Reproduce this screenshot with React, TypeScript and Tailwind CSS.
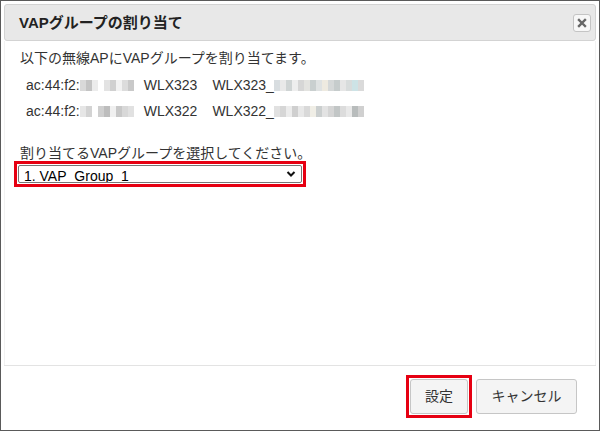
import React from "react";

const FONT = { fontFamily: '"Liberation Sans", "Noto Sans CJK JP", sans-serif' };

function Blur({ cells }: { cells: string[] }) {
  return (
    <span className="inline-flex h-[11px] items-stretch align-middle">
      {cells.map((c, i) => (
        <span key={i} className="w-[6px]" style={{ backgroundColor: c }} />
      ))}
    </span>
  );
}

const blurA = ["#d9d9d9", "#c4c4c4", "#ececec", "#ffffff", "#e3e3e3", "#d0d0d0", "#f2f2f2", "#dcdcdc", "#c9c9c9"];
const blurB = ["#e6e6e6", "#d3d3d3", "#ffffff", "#cfcfcf", "#bdbdbd", "#f0f0f0", "#c8c8c8", "#d8d8d8", "#e1e1e1"];
const blurC = ["#d8dde0", "#e9e9e9", "#cfd4d4", "#eeeeee", "#d6d6d6", "#e3e3e0", "#c9cfcf", "#dfe2e2", "#eeeae0", "#d5d8d8", "#c6cccc", "#e6e6e6", "#d8dcdc", "#cde3e6", "#dadada"];
const blurD = ["#e1e1e1", "#d6d6d6", "#ececec", "#cfcfcf", "#e8e8e8", "#d9d9d9", "#f0eee6", "#cbcfcf", "#e3e3e3", "#d5d5d5", "#c2c6c6", "#dcdcdc", "#e9e9e9", "#b8bcbc", "#d0d0d0"];

export default function App() {
  return (
    <div
      className="w-[600px] h-[431px] border border-[#5a5a5a] bg-white p-[3px] flex flex-col text-[14px] text-[#333]"
      style={FONT}
    >
      <div className="h-[37px] shrink-0 rounded-[3px] border border-[#d3d3d3] bg-[#e8e8e8] flex items-center justify-between pl-[14px] pr-[4px]">
        <span className="text-[15px] font-bold text-[#222] mt-[1px]">VAPグループの割り当て</span>
        <span className="w-[18px] h-[18px] rounded-[3px] border border-[#c4c4c4] bg-[#f7f7f7] flex items-center justify-center">
          <svg width="10" height="10" viewBox="0 0 10 10">
            <path d="M2 2 L8 8 M8 2 L2 8" stroke="#666" strokeWidth="2.4" strokeLinecap="square" />
          </svg>
        </span>
      </div>

      <div className="flex-1 flex flex-col px-[15px] pt-[7px] border-x border-[#f2f2f2]">
        <div className="leading-[20px]">以下の無線APにVAPグループを割り当てます。</div>
        <div className="pl-[6px] mt-[7px] flex flex-col gap-[6px]">
          <div className="flex items-center leading-[20px] whitespace-pre">
            <span>ac:44:f2:</span>
            <Blur cells={blurA} />
            <span className="ml-[10px]">WLX323</span>
            <span className="ml-[15px]">WLX323_</span>
            <Blur cells={blurC} />
          </div>
          <div className="flex items-center leading-[20px] whitespace-pre">
            <span>ac:44:f2:</span>
            <Blur cells={blurB} />
            <span className="ml-[10px]">WLX322</span>
            <span className="ml-[15px]">WLX322_</span>
            <Blur cells={blurD} />
          </div>
        </div>
        <div className="mt-[23px] leading-[18px]">割り当てるVAPグループを選択してください。</div>
        <div className="-ml-[6px] -mt-[1px] w-[292px] h-[26px] border-[3px] border-[#e60012] p-[1px] flex">
          <div className="relative flex-1">
            <select
              className="w-full h-full appearance-none border border-[#767676] rounded-[2px] bg-white pl-[5px] text-[14px] text-black outline-none"
              style={FONT}
              defaultValue="1"
            >
              <option value="1">1. VAP_Group_1</option>
            </select>
            <svg
              className="absolute right-[6px] top-1/2 -translate-y-1/2 pointer-events-none"
              width="10"
              height="7"
              viewBox="0 0 10 7"
            >
              <path d="M1.5 1.5 L5 5 L8.5 1.5" stroke="#111" strokeWidth="2" fill="none" />
            </svg>
          </div>
        </div>
      </div>

      <div className="h-[62px] shrink-0 border-t border-[#e3e3e3] flex items-center justify-end pr-[19px] gap-[4px]">
        <div className="border-[3px] border-[#e60012] p-[1px]">
          <button
            className="w-[58px] h-[35px] rounded-[3px] border border-[#c6c6c6] bg-[#f4f4f4] text-[14px] text-[#333]"
            style={FONT}
          >
            設定
          </button>
        </div>
        <button
          className="w-[101px] h-[35px] rounded-[3px] border border-[#c6c6c6] bg-[#f4f4f4] text-[14px] text-[#333]"
          style={FONT}
        >
          キャンセル
        </button>
      </div>
    </div>
  );
}
